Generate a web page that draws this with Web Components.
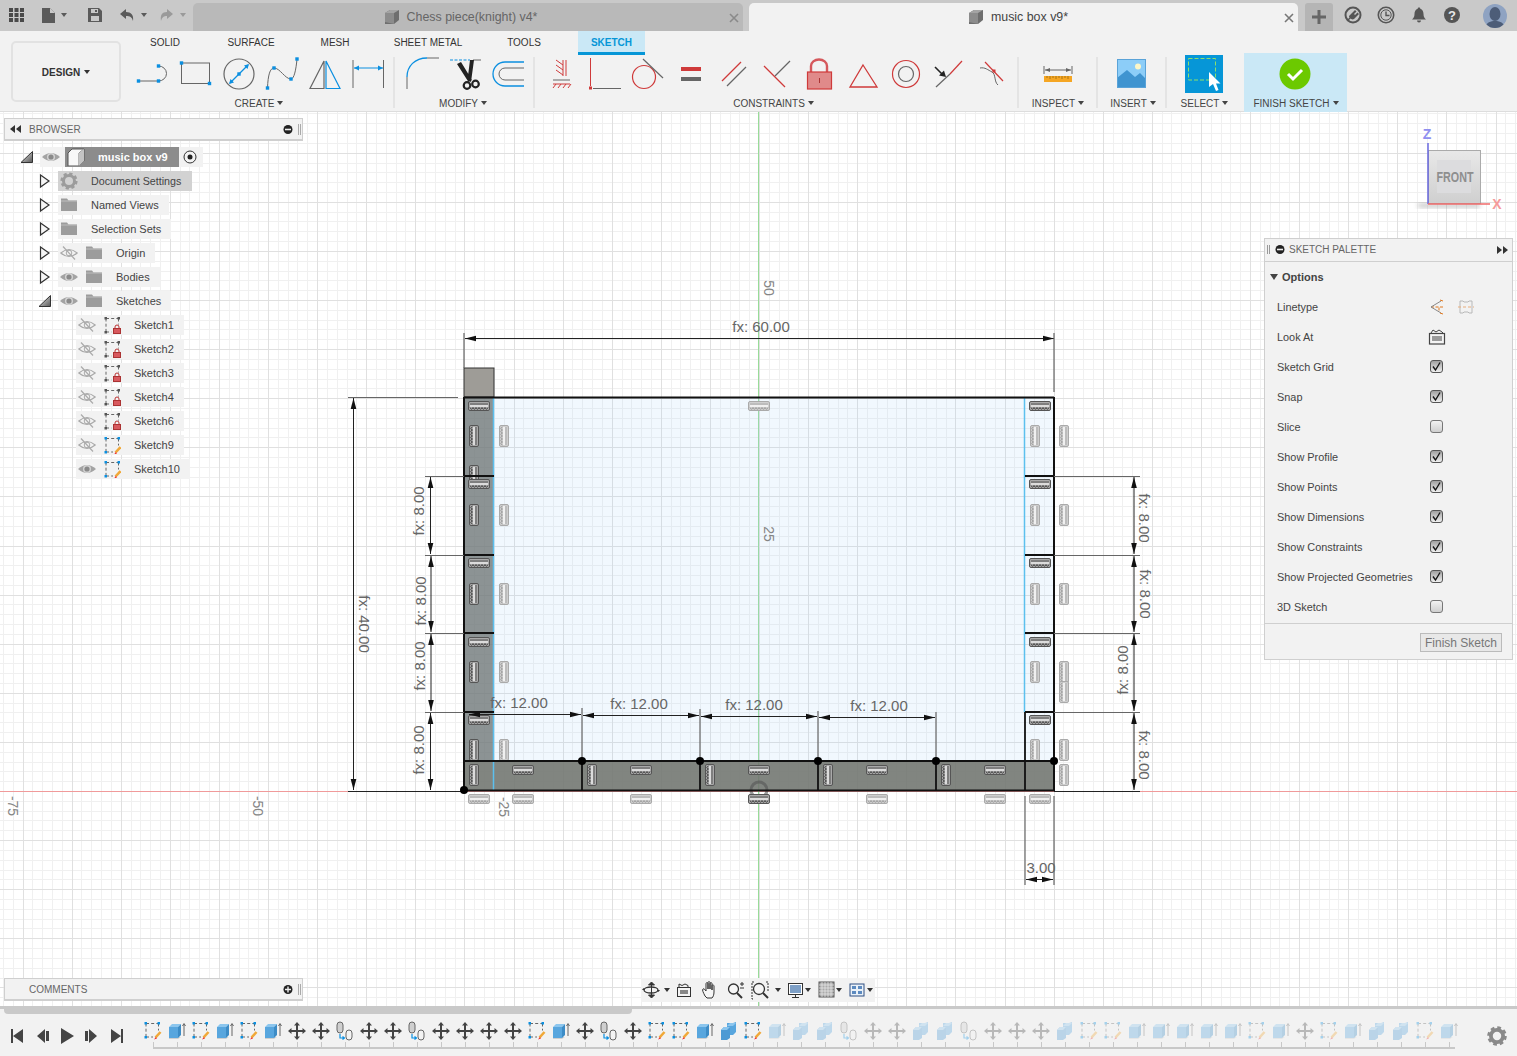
<!DOCTYPE html>
<html>
<head>
<meta charset="utf-8">
<title>music box v9</title>
<style>
  html, body { margin: 0; padding: 0; background: #fff; font-family: "Liberation Sans", Arial, sans-serif; }
</style>
</head>
<body>
<fusion-app>
  <fusion-tabbar></fusion-tabbar>
  <fusion-ribbon></fusion-ribbon>
  <fusion-viewport>
    <sketch-canvas></sketch-canvas>
    <fusion-browser></fusion-browser>
    <view-cube></view-cube>
    <sketch-palette></sketch-palette>
    <fusion-comments></fusion-comments>
    <fusion-navbar></fusion-navbar>
  </fusion-viewport>
  <fusion-timeline></fusion-timeline>
</fusion-app>

<script>
const BL = '#0b8fe0';
const ICONS = {
  eye: '<path d="M0 9Q9 1 18 9Q9 17 0 9Z" fill="#a3a3a3"/><circle cx="9" cy="9" r="4" fill="#d4d4d4"/><circle cx="9" cy="9" r="2.600" fill="#8a8a8a"/>',
  eyeoff: '<path d="M.8 9Q9 2 17.200 9Q9 16 .8 9Z" fill="none" stroke="#aaa" stroke-width="1.200"/><circle cx="9" cy="9" r="2.800" fill="none" stroke="#aaa"/><path d="M3 2.500 15 15.500" stroke="#aaa" stroke-width="1.200"/>',
  folder: '<path d="M1 2.500h6l1.500 2H17V15H1Z" fill="#9c9c9c"/><path d="M1 5h16" stroke="#bdbdbd"/>',
  gear: '<circle cx="9" cy="9" r="5.500" fill="none" stroke="#9c9c9c" stroke-width="3"/><circle cx="9" cy="9" r="7.300" fill="none" stroke="#9c9c9c" stroke-width="2.600" stroke-dasharray="3.200 2.530"/>',
  box: '<path d="M1 5 5 1H17V13L12 18H1Z" fill="#f8f8f8" stroke="#555"/><path d="M12 5V18M12 5 17 1" fill="none" stroke="#777"/><path d="M12 5 17 1V13L12 18Z" fill="#c4c4c4"/>',
  sketchlock: '<path d="M3 2.500H15.500M3 2.500V16M3 16H8.500M15.500 2.500V8.500" fill="none" stroke="#666" stroke-dasharray="3 2.200"/><path d="M1.500 1h2.500v2.500H1.500zM14.500 1H17v2.500h-2.500zM1.500 15H4v2.500H1.500z" fill="#555"/><rect x="10.500" y="12.500" width="7" height="5" fill="#d8595e" stroke="#a33"/><path d="M12 12.500v-1.500a2 2 0 0 1 4 0V12.500" fill="none" stroke="#b33"/>',
  sketchedit: '<path d="M3 2.500H15.500M3 2.500V16M3 16H10M15.500 2.500V9.500" fill="none" stroke="#666" stroke-dasharray="3 2.200"/><path d="M1.500 1h2.500v2.500H1.500zM14.500 1H17v2.500h-2.500zM1.500 15H4v2.500H1.500z" fill="'+BL+'"/><path d="M17.500 11 12.500 16.500" stroke="#f0a838" stroke-width="2.600"/><path d="M12.800 16 11 18.500l3-1Z" fill="#e33"/>',
  extrude: '<path d="M2 16v2h9l3-2z" fill="#cfcfcf"/><path d="M2 6h9v11H2z" fill="#58a6de"/><path d="M2 6l3-3h9l-3 3z" fill="#8cc6ee"/><path d="M11 6l3-3v11l-3 3z" fill="#3d8cc6"/><path d="M17 15V3M15.500 5 17 2.500 18.500 5" fill="none" stroke="#666"/>',
  move: '<path d="M10 1 13 4.500H11V9H15.500V7L19 10 15.500 13V11H11V15.500H13L10 19 7 15.500H9V11H4.500V13L1 10 4.500 7V9H9V4.500H7Z" fill="#444"/>',
  joint: '<rect x="2" y="1" width="6" height="11" rx="3" fill="#cfcfcf" stroke="#666"/><rect x="11" y="9" width="6" height="10" rx="3" fill="#f4f4f4" stroke="#666"/><path d="M5 13V17H9M7.500 15.500 9.500 17 7.500 18.500" fill="none" stroke="'+BL+'" stroke-width="1.200"/>',
  combine: '<path d="M8 2h6l3-1v10l-3 3H8z" fill="#58a6de"/><path d="M8 5l3-3h6l-3 3z" fill="#8cc6ee"/><path d="M2 9l3-3h6v11l-3 2H2z" fill="#4c9ad4"/><path d="M2 9h6l3-3H5z" fill="#8cc6ee"/>',
  plug: '<circle cx="9" cy="9" r="7.500" fill="none" stroke="#555" stroke-width="2"/><path d="M5 10 8 7l3-3 1.500 1.500L10 8l1 1 2.500-2.500L15 8l-5 5c-1.500 1-3 0-3.500-.5L4 15l-1-1 2.500-2.500C5 11 5 10.500 5 10Z" fill="#555"/>',
  clock: '<circle cx="9" cy="9" r="7.700" fill="none" stroke="#555" stroke-width="1.600"/><circle cx="9" cy="9" r="5.200" fill="none" stroke="#555"/><path d="M9 5.500V9.500H12.500" fill="none" stroke="#555" stroke-width="1.400"/>',
  bell: '<path d="M9 1.500c.8 0 1.300.5 1.300 1.300C12.500 3.500 13.500 5.500 13.500 8c0 3 1 4 2.500 5.500H2C3.500 12 4.500 11 4.500 8c0-2.500 1-4.500 3.200-5.200C7.700 2 8.200 1.500 9 1.500Z" fill="#555"/><path d="M7 14.500h4a2 2 0 0 1-4 0Z" fill="#555"/>',
  help: '<circle cx="9" cy="9" r="8" fill="#555"/><text x="9" y="13.500" text-anchor="middle" font-family="Liberation Sans" font-size="13" font-weight="bold" fill="#e8e8e8">?</text>'
};

function icon(name, size = 18, vb = 18) {
  return `<svg width="${size}" height="${size}" viewBox="0 0 ${vb} ${vb}" style="display:block;flex:none">${ICONS[name]}</svg>`;
}

class FusionApp extends HTMLElement {
  constructor() {
    super();
    this.attachShadow({ mode: 'open' });
    this.shadowRoot.innerHTML = `
      <style>
        :host { display: flex; flex-direction: column; width: 1517px; height: 1056px; overflow: hidden; color: #444; }
      </style>
      <slot></slot>`;
  }
}

class FusionTabbar extends HTMLElement {
  constructor() {
    super();
    this.attachShadow({ mode: 'open' });
    const cube = `<svg width="18" height="18" viewBox="0 0 18 18"><path d="M2 5 7 2h9v10l-5 4H2Z" fill="#6e6e6e"/><path d="M2 5 7 2h9l-5 3Z" fill="#a4a4a4"/><path d="M2 5h9v11l-9-2Z" fill="#8c8c8c"/></svg>`;
    const x = c => `<svg width="10" height="10" viewBox="0 0 10 10"><path d="M1 1 9 9M9 1 1 9" stroke="${c}" stroke-width="1.600"/></svg>`;
    this.shadowRoot.innerHTML = `
      <style>
        :host { display: flex; height: 31px; flex: none; background: #c9c9c9; box-sizing: border-box; padding-top: 3px; font-family: "Liberation Sans", sans-serif; font-size: 12.400px; }
        .quick { width: 193px; height: 28px; flex: none; }
        .tab { width: 550px; height: 28px; flex: none; border-radius: 5px 5px 0 0; background: #b9b9b9; color: #666; display: flex; align-items: center; justify-content: center; gap: 6px; position: relative; box-sizing: border-box; padding-right: 16px; }
        .tab.on { background: #f2f2f2; color: #444; margin-left: 6px; width: 549px; padding-right: 12px; }
        .tab .x { position: absolute; right: 4px; top: 9px; }
        .plus { width: 28px; height: 28px; margin-left: 7px; background: #b5b5b5; border-radius: 3px 3px 0 0; flex: none; display: flex; align-items: center; justify-content: center; }
        .tools { display: flex; align-items: center; height: 28px; margin-left: 11px; gap: 15px; margin-top: -2px; }
        .avatar { width: 24px; height: 24px; border-radius: 50%; margin-left: 7px; margin-top: 1px; background: #8fa3c2; overflow: hidden; }
      </style>
      <div class="quick">
        <svg width="193" height="28" viewBox="0 3 193 28" style="display:block">
          <path d="M9 8h4v4H9zM14.500 8h4v4h-4zM20 8h4v4h-4zM9 13h4v4H9zM14.500 13h4v4h-4zM20 13h4v4h-4zM9 18h4v4H9zM14.500 18h4v4h-4zM20 18h4v4h-4z" fill="#4a4a4a"/>
          <path d="M42 8h8l5 5v10H42Z" fill="#5a5a5a"/><path d="M50 8v5h5" fill="#c9c9c9"/>
          <path d="M61 13h6l-3 4Z" fill="#5a5a5a"/>
          <path d="M88 8h11l3 3v11H88Z" fill="#5a5a5a"/><path d="M91 9h7v4h-7zM91 16h8v5h-8z" fill="#c9c9c9"/><path d="M95 10h2v2h-2z" fill="#5a5a5a"/>
          <path d="M126 9 120 14l6 5v-3c4 0 6 1 7 5 1-6-2-9-7-9Z" fill="#5a5a5a"/>
          <path d="M141 13h6l-3 4Z" fill="#5a5a5a"/>
          <path d="M167 9 173 14l-6 5v-3c-3 0-5 1-6 5-1-6 1-9 6-9Z" fill="#9a9a9a"/>
          <path d="M180 13h6l-3 4Z" fill="#9a9a9a"/>
        </svg>
      </div>
      <div class="tab">${cube}<span>Chess piece(knight) v4*</span><span class="x">${x('#8a8a8a')}</span></div>
      <div class="tab on">${cube}<span>music box v9*</span><span class="x">${x('#777')}</span></div>
      <div class="plus"><svg width="14" height="14" viewBox="0 0 14 14"><path d="M7 0v14M0 7h14" stroke="#666" stroke-width="3"/></svg></div>
      <div class="tools">${icon('plug')}${icon('clock')}${icon('bell')}${icon('help')}
        <div class="avatar"><svg width="24" height="24" viewBox="0 0 24 24" style="display:block"><ellipse cx="12" cy="10" rx="5.500" ry="7" fill="#4d5d78"/><path d="M2 24c1-6 6-7 10-7s9 1 10 7Z" fill="#4d5d78"/></svg></div>
      </div>`;
  }
}

class RibbonGroup extends HTMLElement {
  connectedCallback() {
    this.attachShadow({ mode: 'open' });
    const w = this.getAttribute('w');
    const top = this.hasAttribute('finish');
    this.shadowRoot.innerHTML = `
      <style>
        :host { display: block; flex: none; width: ${w}px; height: ${top ? 59 : 51}px; margin-top: ${top ? 22 : 2}px; box-sizing: border-box; font-family: "Liberation Sans", sans-serif; }
        :host([sep]) { border-right: 2px solid #e4e4e4; }
        :host([finish]) { background: #cae8f6; }
        ::slotted(svg) { display: block; overflow: visible; margin-top: ${top ? 0 : -2}px; }
        .lbl { margin-top: ${top ? 5 : 3}px; height: 12px; line-height: 12px; text-align: center; font-size: 10px; color: #444; white-space: nowrap; padding-left: ${this.getAttribute('pl') || 0}px; padding-right: ${this.getAttribute('pr') || 0}px; }
        .lbl i { display: inline-block; border: 3px solid transparent; border-top: 4px solid #444; border-bottom: 0; margin-left: 3px; vertical-align: 2px; }
      </style>
      <slot></slot>
      <div class="lbl">${this.getAttribute('label')}<i></i></div>`;
  }
}

class FusionRibbon extends HTMLElement {
  constructor() {
    super();
    this.attachShadow({ mode: 'open' });
    const sq = (x, y) => `<rect x="${x - 1.700}" y="${y - 1.700}" width="3.400" height="3.400" fill="${BL}"/>`;
    const R = '#cf3a3a', G = '#666';
    this.shadowRoot.innerHTML = `
      <style>
        :host { display: flex; flex: none; height: 81px; box-sizing: border-box; background: #f2f2f2; border-bottom: 1px solid #ddd; padding-left: 11px; font-family: "Liberation Sans", sans-serif; }
        .design { width: 110px; height: 61px; margin: 10px 9px 0 0; box-sizing: border-box; border: 2px solid #e2e2e2; border-radius: 5px; display: flex; align-items: center; justify-content: center; font-size: 10px; font-weight: bold; color: #333; flex: none; padding-top: 1px; }
        .design i { display: inline-block; border: 3px solid transparent; border-top: 4px solid #333; border-bottom: 0; margin-left: 4px; }
        .main { width: 1114px; flex: none; }
        .tabs { display: flex; height: 24px; }
        .tabs span { font-size: 10px; line-height: 24px; text-align: center; color: #333; flex: none; }
        .tabs .on { margin-left: 18px; box-sizing: border-box; height: 24px; background: #cae8f6; color: #0696d7; font-weight: bold; border-bottom: 3px solid #0696d7; }
        .groups { display: flex; }
      </style>
      <div class="design">DESIGN<i></i></div>
      <div class="main">
        <div class="tabs">
          <span style="width:70px">SOLID</span><span style="width:102px">SURFACE</span><span style="width:66px">MESH</span><span style="width:120px">SHEET METAL</span><span style="width:72px">TOOLS</span><span class="on" style="width:67px">SKETCH</span>
        </div>
        <div class="groups">
          <ribbon-group w="265" label="CREATE" pr="5" sep><svg width="265" height="40" viewBox="130 55 265 40">
            <path d="M138.500 81H158.500" stroke="${G}" fill="none"/><path d="M158.500 66A8 7.500 0 0 1 158.500 81" stroke="${G}" fill="none"/>${sq(138.500, 81)}${sq(158.500, 81)}${sq(158.500, 66)}
            <rect x="181.500" y="63" width="28" height="20.500" fill="none" stroke="${G}"/>${sq(181.500, 63)}${sq(209.500, 83.500)}
            <circle cx="239" cy="74" r="15" fill="none" stroke="${G}" stroke-width="1.200"/><path d="M230 83 248 65" stroke="${BL}" stroke-width="1.200"/><path d="M229 84l1.500-5 3.500 3.500zM249 64l-5 1.500 3.500 3.500z" fill="${BL}"/>${sq(239, 74)}
            <path d="M267.500 88C268 75 270 68 274 68C280 68 285 79 291 79C294 79 296 70 297 59" fill="none" stroke="${G}"/>${sq(267.500, 88)}${sq(274, 68)}${sq(291, 79)}${sq(297, 59)}
            <path d="M324 61V88.500H310Z" fill="none" stroke="${G}" stroke-width="1.200"/><path d="M326 61V88.500H340Z" fill="none" stroke="${BL}" stroke-width="1.200"/>
            <path d="M353 60V88M383.500 60V88" stroke="${G}"/><path d="M354 68H383" stroke="${BL}"/><path d="M354 68l5-2.500v5zM383 68l-5-2.500v5z" fill="${BL}"/>
          </svg></ribbon-group>
          <ribbon-group w="140" label="MODIFY" pr="2" sep><svg width="140" height="40" viewBox="395 55 140 40">
            <path d="M407 77C407 66 415 58 427 58" fill="none" stroke="${BL}" stroke-width="1.300"/><path d="M427 58H439M407 77V89" fill="none" stroke="${G}"/>
            <path d="M450 60H470" stroke="${BL}" stroke-dasharray="3 1.500"/><path d="M473 60H481" stroke="${G}"/>
            <path d="M457 64 461 62 472 80 468.500 82ZM470 60 474 60 471 82 467.500 80Z" fill="#222"/><circle cx="475.500" cy="84" r="3.300" fill="none" stroke="#222" stroke-width="2.200"/><circle cx="467" cy="85.500" r="3.300" fill="none" stroke="#222" stroke-width="2.200"/>
            <path d="M524 62H505A12 12 0 0 0 505 86H524" fill="none" stroke="${BL}" stroke-width="1.300"/><path d="M524 68H505A6 6 0 0 0 505 80H524" fill="none" stroke="${G}"/>
          </svg></ribbon-group>
          <ribbon-group w="484" label="CONSTRAINTS" pr="5" sep><svg width="484" height="40" viewBox="535 55 484 40">
            <path d="M556 60l7 5M556 65l7 5M556 70l7 5M563 60V76M566 60V76" stroke="${R}" fill="none"/><path d="M553 80H570" stroke="${G}"/><path d="M553 84H570M556 84l-3 4M561 84l-3 4M566 84l-3 4M571 84l-3 4" stroke="${R}" fill="none"/>
            <path d="M590.500 58V86" stroke="${R}"/><rect x="589" y="86.500" width="3" height="3" fill="${R}"/><path d="M593 88.500H621" stroke="${G}"/>
            <circle cx="644" cy="77" r="11.500" fill="none" stroke="${R}" stroke-width="1.200"/><path d="M643 59 663 78" stroke="${G}" stroke-width="1.200"/>
            <rect x="681" y="67" width="20" height="4" fill="${R}"/><rect x="681" y="77" width="20" height="4" fill="${G}"/>
            <path d="M722 81 741 62" stroke="${R}" stroke-width="1.200"/><path d="M727 86 746 67" stroke="${G}" stroke-width="1.200"/>
            <path d="M764 66 785 87" stroke="${R}" stroke-width="1.200"/><path d="M775 76 790 61" stroke="${G}" stroke-width="1.200"/>
            <path d="M811 72V66a8 6.500 0 0 1 16 0V72" fill="none" stroke="#d5585c" stroke-width="2.400"/><rect x="807.500" y="72" width="24" height="17" fill="#e08a8a" stroke="#cf3a3a" stroke-width="1.200"/><path d="M819.500 78V83" stroke="#a33"/>
            <path d="M863 65 877 87H850Z" fill="none" stroke="${R}" stroke-width="1.300"/>
            <circle cx="906" cy="74" r="13.500" fill="none" stroke="${R}" stroke-width="1.200"/><circle cx="906" cy="74" r="7.500" fill="none" stroke="${G}" stroke-width="1.200"/>
            <path d="M936 87 950 74" stroke="${G}" stroke-width="1.200"/><path d="M950 74 962 61" stroke="${R}" stroke-width="1.200"/><path d="M935 67 942 74" stroke="#222" stroke-width="1.600"/><path d="M946 77 939 75.500 944 70.500Z" fill="#222"/>
            <path d="M985 62 1003 81" stroke="${R}" stroke-width="1.200"/><path d="M980 68C985 67 988 70 992 72S994 82 998 85" fill="none" stroke="${G}"/><rect x="992.500" y="69.500" width="3" height="3" fill="${R}"/>
          </svg></ribbon-group>
          <ribbon-group w="79" label="INSPECT" pl="1" sep><svg width="79" height="40" viewBox="1019 55 79 40">
            <path d="M1044 66V74M1072 66V74M1045 70H1071" stroke="#666" fill="none"/><path d="M1045 70l5-2v4zM1071 70l-5-2v4z" fill="#666"/>
            <rect x="1044" y="76" width="28" height="6" fill="#f5a623"/><path d="M1047 76v2M1050 76v3M1053 76v2M1056 76v3M1059 76v2M1062 76v3M1065 76v2M1068 76v3" stroke="#a87415"/>
          </svg></ribbon-group>
          <ribbon-group w="69" label="INSERT" pl="3" sep><svg width="69" height="40" viewBox="1098 55 69 40">
            <rect x="1117" y="59" width="29" height="29" fill="#8ccdf8"/><path d="M1117 78 1127 70 1135 77 1140 73 1146 79V88H1117Z" fill="#3f94d0"/><circle cx="1138" cy="66.500" r="3" fill="#fbf6c8"/><rect x="1117.500" y="59.500" width="28" height="28" fill="none" stroke="#5aa3d8"/>
          </svg></ribbon-group>
          <ribbon-group w="77" label="SELECT" pr="2"><svg width="77" height="40" viewBox="1167 55 77 40">
            <rect x="1185" y="55" width="38" height="38" fill="#0696d7"/><rect x="1188.500" y="58.500" width="27" height="21.500" fill="none" stroke="#8ee06a" stroke-dasharray="4 2"/><path d="M1209 72V87L1213 84 1216 91 1218.500 90 1216 83.500H1220.500Z" fill="#fff"/>
          </svg></ribbon-group>
        </div>
      </div>
      <ribbon-group w="103" label="FINISH SKETCH" pl="1" finish><svg width="103" height="40" viewBox="1244 53 103 40">
        <circle cx="1295" cy="74" r="15.500" fill="#6cc900"/><path d="M1288 74 1293 79 1302 70" fill="none" stroke="#fff" stroke-width="3"/>
      </svg></ribbon-group>`;
  }
}

class FusionViewport extends HTMLElement {
  constructor() {
    super();
    this.attachShadow({ mode: 'open' });
    this.shadowRoot.innerHTML = `
      <style>:host { display: block; position: relative; flex: none; height: 894px; background: #fff; overflow: hidden; }</style>
      <slot></slot>`;
  }
}

// the drawing area uses page coordinates, the viewBox starts below the ribbon
class SketchCanvas extends HTMLElement {
  connectedCallback() {
    this.attachShadow({ mode: 'open' });
    const U = 9.82, OX = 759, OY = 791;
    let minor = '', major = '';
    for (let k = -77; k <= 78; k++) {
      const x = Math.round(OX + k * U) + .5;
      if (k % 5 === 0) major += `M${x} 112V1006`; else minor += `M${x} 112V1006`;
    }
    for (let k = -22; k <= 70; k++) {
      const y = Math.round(OY - k * U) + .5;
      if (k % 5 === 0) major += `M0 ${y}H1517`; else minor += `M0 ${y}H1517`;
    }

    const h = (x, y, c) => `<use href="#g${c}" transform="translate(${x - 11} ${y - 5})"/>`;
    const v = (x, y, c) => `<use href="#g${c}" transform="translate(${x + 5} ${y - 11}) rotate(90)"/>`;
    let glyphs = v(474, 476, 'D');
    [[479,406],[479,484],[479,563],[479,642],[479,720],[523,770],[641,770],[759,770],[877,770],[995,770],
     [1040,406],[1040,484],[1040,563],[1040,642],[1040,720],[759,799]].forEach(p => glyphs += h(p[0], p[1], 'D'));
    [[759,406],[479,799],[523,799],[641,799],[877,799],[995,799],[1040,799]].forEach(p => glyphs += h(p[0], p[1], 'P'));
    [[474,436],[474,515],[474,594],[474,672],[474,750],[474,775],[592,775],[710,775],[828,775],[946,775]].forEach(p => glyphs += v(p[0], p[1], 'D'));
    [[504,436],[504,515],[504,594],[504,672],[504,750],[1035,436],[1035,515],[1035,594],[1035,672],[1035,750],
     [1064,436],[1064,515],[1064,594],[1064,672],[1064,692],[1064,750],[1064,775]].forEach(p => glyphs += v(p[0], p[1], 'P'));

    const ah = (x, y, d) => `<path d="M${x} ${y}l${d * 11} -2.800v5.600z" fill="#111"/>`;
    const av = (x, y, d) => `<path d="M${x} ${y}l-2.800 ${d * 11}h5.600z" fill="#111"/>`;
    const hdim = (x1, x2, y) => `<path d="M${x1} ${y}H${x2}" stroke="#222"/>${ah(x1, y, 1)}${ah(x2, y, -1)}`;
    const vdim = (x, y1, y2) => `<path d="M${x} ${y1}V${y2}" stroke="#222"/>${av(x, y1, 1)}${av(x, y2, -1)}`;
    const wit = d => `<path d="${d}" stroke="#666" stroke-width="1.200" fill="none"/>`;
    const txt = (x, y, s, r = 0, cls = 'dim') => `<text class="${cls}" x="${x}" y="${y}" transform="rotate(${r} ${x} ${y})">${s}</text>`;

    const dims = [
      hdim(465, 1054, 338.500), wit('M464 333V368M1054 333V392'),
      vdim(353.500, 398, 790), wit('M348 397.500H458'),
      vdim(430.500, 477, 554), vdim(431, 556, 632), vdim(431, 634, 711), vdim(430.500, 713, 790),
      wit('M425 476.500H464M425 555.500H464M425 633.500H464M425 712.500H464'),
      vdim(1134, 477, 554), vdim(1134, 556, 632), vdim(1134, 634, 711), vdim(1134, 713, 790),
      wit('M1054 476.500H1140M1054 555.500H1140M1054 633.500H1140M1054 712.500H1140'),
      hdim(469, 581, 714.500), hdim(583, 699, 715.500), hdim(701, 817, 716.500), hdim(819, 935, 717.500),
      wit('M582 708V761M700 709V761M818 711V761M936 712V761'),
      wit('M1025 796V885M1054 796V885'), hdim(1026, 1053, 879.500),
      txt(761, 326, 'fx: 60.00'), txt(364, 624, 'fx: 40.00', 90),
      txt(418, 511, 'fx: 8.00', -90), txt(420, 601, 'fx: 8.00', -90), txt(419, 666, 'fx: 8.00', -90), txt(418, 750, 'fx: 8.00', -90),
      txt(1144, 518, 'fx: 8.00', 90), txt(1145, 594, 'fx: 8.00', 90), txt(1122, 670, 'fx: 8.00', -90), txt(1144, 755, 'fx: 8.00', 90),
      txt(519, 702, 'fx: 12.00'), txt(639, 703, 'fx: 12.00'), txt(754, 704, 'fx: 12.00'), txt(879, 705, 'fx: 12.00'),
      txt(1041, 867, '3.00')
    ].join('');

    const serr = 'M2 6.500q1.500 3.500 3 0q1.500 3.500 3 0q1.500 3.500 3 0q1.500 3.500 3 0q1.500 3.500 3 0q1.500 3.500 3 0';
    this.shadowRoot.innerHTML = `
      <style>
        :host { display: block; position: absolute; inset: 0; }
        svg { display: block; }
        text { font-family: "Liberation Sans", sans-serif; text-anchor: middle; dominant-baseline: central; }
        .dim { font-size: 15px; fill: #666; }
        .ax { font-size: 14px; fill: #858585; }
      </style>
      <svg width="1517" height="894" viewBox="0 112 1517 894">
        <defs>
          <g id="gD"><rect x=".5" y=".5" width="21" height="9" rx="1.500" fill="#a9a9a9" stroke="#555"/><path d="M2 3H20" stroke="#555"/><path d="M2 4H20V6H2Z" fill="#dcdcdc"/><path d="${serr}" fill="none" stroke="#444"/></g>
          <g id="gP"><rect x=".5" y=".5" width="21" height="9" rx="1.500" fill="#cfcfcf" stroke="#aaa"/><path d="M2 3H20" stroke="#aaa"/><path d="M2 4H20V6H2Z" fill="#f0f0f0"/><path d="${serr}" fill="none" stroke="#9c9c9c"/></g>
        </defs>
        <path d="${minor}" stroke="#f0f0f0" fill="none" shape-rendering="crispEdges"/>
        <path d="${major}" stroke="#e0e0e0" fill="none" shape-rendering="crispEdges"/>
        <path d="M0 791.500H1517" stroke="#f09a9a" shape-rendering="crispEdges"/>
        <path d="M758.500 112V1006" stroke="#98dc98" shape-rendering="crispEdges"/>

        <rect x="464" y="397" width="590" height="364" fill="#9ed2f5" fill-opacity=".15"/>
        <rect x="464" y="397" width="30" height="364" fill="#707676" fill-opacity=".78"/>
        <rect x="464" y="761" width="590" height="30" fill="#6f746e" fill-opacity=".88"/>
        <rect x="464" y="368" width="30" height="29" fill="#9e9c97" stroke="#333"/>
        <circle cx="759" cy="790" r="8" fill="none" stroke="#555" stroke-width="3" stroke-opacity=".6"/>
        ${glyphs}
        <path d="M493.500 397V791M1024.500 397V712" stroke="#5cc0ee" stroke-width="1.500"/>
        <path d="M464 397.500H1054M1054 397V791M464 397V791M464 790.500H1054M464 761H1054" stroke="#111" stroke-width="2" fill="none"/>
        <path d="M464 476H494M464 555H494M464 633H494M464 712H494M1025 476H1054M1025 555H1054M1025 633H1054M1025 712H1054M582 761V791M700 761V791M818 761V791M936 761V791M1025 712V791" stroke="#111" stroke-width="1.800" fill="none"/>
        <path d="M348 791.500H464M1054 791.500H1140" stroke="#222"/>
        ${dims}
        <g fill="#000"><circle cx="464" cy="790" r="4"/><circle cx="582" cy="761" r="4"/><circle cx="700" cy="761" r="4"/><circle cx="818" cy="761" r="4"/><circle cx="936" cy="761" r="4"/><circle cx="1054" cy="761" r="4"/></g>
        ${txt(769, 288, '50', 90, 'ax')}${txt(769, 534, '25', 90, 'ax')}${txt(504, 807, '-25', 90, 'ax')}${txt(258, 806, '-50', 90, 'ax')}${txt(13, 806, '-75', 90, 'ax')}
      </svg>`;
  }
}

class TreeRow extends HTMLElement {
  connectedCallback() {
    this.attachShadow({ mode: 'open' });
    const a = this.getAttribute.bind(this);
    const arrow = a('arrow');
    const arrowSvg = arrow === 'right'
      ? '<svg width="18" height="20" viewBox="0 0 18 20"><path d="M4.500 4 13 10 4.500 16Z" fill="#f6f6f6" stroke="#333" stroke-width="1.200"/></svg>'
      : arrow === 'open'
      ? '<svg width="18" height="20" viewBox="0 0 18 20"><defs><linearGradient id="o" x1="0" y1="0" x2="1" y2="1"><stop offset="0" stop-color="#eee"/><stop offset="1" stop-color="#555"/></linearGradient></defs><path d="M3 15.500 14.500 15.500 14.500 4.500Z" fill="url(#o)" stroke="#333"/></svg>'
      : '';
    const eye = a('eye') ? `<span class="ic">${icon(a('eye') === 'on' ? 'eye' : 'eyeoff')}</span>` : '';
    const cls = a('icon');
    this.shadowRoot.innerHTML = `
      <style>
        :host { display: flex; height: 20px; align-items: center; gap: 4px; font-size: 11px; color: #444; }
        .arrow { width: 18px; height: 20px; flex: none; }
        .pill { display: flex; align-items: center; height: 20px; background: #f2f2f2; padding: 0 10px 0 2px; white-space: nowrap; }
        :host([sel]) .pill { background: #d2d2d2; padding-right: 11px; font-size: 10.700px; }
        .ic { width: 18px; height: 18px; flex: none; }
        .ic + .ic { margin-left: 7px; }
        .t { margin-left: 13px; }
        :host([root]) .pill { padding-right: 5px; }
        .bar { display: flex; align-items: center; width: 114px; height: 20px; background: #8c8c8c; margin-left: 5px; box-sizing: border-box; padding-left: 2px; color: #fff; font-weight: bold; }
        .bar span { margin-left: 13px; }
        .radio { margin-left: 3px; }
      </style>
      <div class="arrow">${arrowSvg}</div>
      <div class="pill">${a('root') !== null
        ? `${eye}<div class="bar">${icon('box')}<span>${a('label')}</span></div><svg class="radio" width="16" height="16" viewBox="0 0 16 16"><circle cx="8" cy="8" r="6" fill="#f4f4f4" stroke="#333"/><circle cx="8" cy="8" r="2.500" fill="#222"/></svg>`
        : `${eye}<span class="ic">${icon(cls)}</span><span class="t">${a('label')}</span>`}</div>`;
    this.style.marginLeft = (a('indent') || 0) + 'px';
  }
}

class PanelHeader extends HTMLElement {
  connectedCallback() {
    this.attachShadow({ mode: 'open' });
    const collapsed = this.hasAttribute('plus');
    const mid = collapsed
      ? '<path d="M5 2.500v6M2 5.500h6" stroke="#eee" stroke-width="1.400"/>'
      : '<path d="M2 5.500h6" stroke="#eee" stroke-width="1.600"/>';
    this.shadowRoot.innerHTML = `
      <style>
        :host { display: flex; align-items: center; height: 23px; box-sizing: border-box; border: 1px solid #cfcfcf; border-bottom-width: 2px; background: #f2f2f2; font-size: 10px; color: #666; padding-left: 5px; }
        .l { width: 19px; flex: none; }
        .t { flex: 1; }
        .r { flex: none; display: block; }
      </style>
      <div class="l">${collapsed ? '' : '<svg width="12" height="8" viewBox="0 0 12 8" style="display:block"><path d="M5 0V8L0 4ZM11 0V8L6 4Z" fill="#333"/></svg>'}</div>
      <div class="t">${this.getAttribute('label')}</div>
      <svg class="r" width="19" height="11" viewBox="0 0 19 11"><circle cx="5" cy="5.500" r="4.500" fill="#222"/>${mid}<path d="M15.500 0v11M17.500 0v11" stroke="#aaa"/></svg>`;
  }
}

class FusionBrowser extends HTMLElement {
  constructor() {
    super();
    this.attachShadow({ mode: 'open' });
    const sk = (label, eye, ic) => `<tree-row indent="50" eye="${eye}" icon="${ic}" label="${label}"></tree-row>`;
    this.shadowRoot.innerHTML = `
      <style>
        :host { display: block; position: absolute; left: 4px; top: 6px; width: 299px; font-family: "Liberation Sans", sans-serif; }
        .tree { display: flex; flex-direction: column; gap: 4px; margin-top: 6px; }
      </style>
      <panel-header label="BROWSER"></panel-header>
      <div class="tree">
        <tree-row root indent="14" arrow="open" eye="on" label="music box v9"></tree-row>
        <tree-row sel indent="32" arrow="right" icon="gear" label="Document Settings"></tree-row>
        <tree-row indent="32" arrow="right" icon="folder" label="Named Views"></tree-row>
        <tree-row indent="32" arrow="right" icon="folder" label="Selection Sets"></tree-row>
        <tree-row indent="32" arrow="right" eye="off" icon="folder" label="Origin"></tree-row>
        <tree-row indent="32" arrow="right" eye="on" icon="folder" label="Bodies"></tree-row>
        <tree-row indent="32" arrow="open" eye="on" icon="folder" label="Sketches"></tree-row>
        ${sk('Sketch1', 'off', 'sketchlock')}${sk('Sketch2', 'off', 'sketchlock')}${sk('Sketch3', 'off', 'sketchlock')}${sk('Sketch4', 'off', 'sketchlock')}${sk('Sketch6', 'off', 'sketchlock')}${sk('Sketch9', 'off', 'sketchedit')}${sk('Sketch10', 'on', 'sketchedit')}
      </div>`;
  }
}

class FusionComments extends HTMLElement {
  constructor() {
    super();
    this.attachShadow({ mode: 'open' });
    this.shadowRoot.innerHTML = `
      <style>:host { display: block; position: absolute; left: 4px; top: 866px; width: 299px; font-family: "Liberation Sans", sans-serif; }</style>
      <panel-header plus label="COMMENTS"></panel-header>`;
  }
}

class ViewCube extends HTMLElement {
  constructor() {
    super();
    this.attachShadow({ mode: 'open' });
    this.shadowRoot.innerHTML = `
      <style>
        :host { display: block; position: absolute; left: 1410px; top: 10px; width: 100px; height: 100px; }
        text { font-family: "Liberation Sans", sans-serif; text-anchor: middle; font-weight: bold; }
      </style>
      <svg width="100" height="100" viewBox="1410 122 100 100" style="display:block">
        <defs>
          <linearGradient id="f" x1="0" y1="0" x2="0" y2="1"><stop offset="0" stop-color="#e8e8e8"/><stop offset="1" stop-color="#cfcfcf"/></linearGradient>
          <filter id="b"><feGaussianBlur stdDeviation="2.500"/></filter>
        </defs>
        <rect x="1418" y="203" width="62" height="5" fill="#999" opacity=".5" filter="url(#b)"/>
        <rect x="1428.500" y="150.500" width="52" height="53" fill="url(#f)" stroke="#aaa"/>
        <rect x="1437" y="160" width="34" height="33" fill="#dcdcde"/>
        <text x="1455" y="182" font-size="14" textLength="37" lengthAdjust="spacingAndGlyphs" fill="#8e8e8e">FRONT</text>
        <path d="M1428 143V204" stroke="#6a6ae0" stroke-width="1.500"/>
        <path d="M1428 204H1490" stroke="#f06a6a" stroke-width="1.500"/>
        <text x="1427" y="139" font-size="14" fill="#8f8ff0">Z</text>
        <text x="1497" y="209" font-size="14" fill="#f59a9a">X</text>
      </svg>`;
  }
}

class PaletteRow extends HTMLElement {
  connectedCallback() {
    this.attachShadow({ mode: 'open' });
    const check = this.getAttribute('check');
    const box = check === null ? '' :
      `<div class="cb ${check === 'on' ? 'on' : ''}">${check === 'on' ? '<svg width="11" height="11" viewBox="0 0 11 11" style="display:block"><path d="M2 5.500 4.500 9 9 1.500" fill="none" stroke="#111" stroke-width="1.300"/></svg>' : ''}</div>`;
    this.shadowRoot.innerHTML = `
      <style>
        :host { display: grid; grid-template-columns: 141px 20px 20px; column-gap: 9px; align-items: center; height: 30px; padding-left: 12px; font-size: 10.900px; color: #444; }
        .c { display: flex; justify-content: center; align-items: center; margin-top: -1px; margin-left: -1px; }
        .cb { width: 11px; height: 11px; border: 1px solid #555; border-radius: 3px; background: linear-gradient(#d8d8d8, #f4f4f4); }
        .cb:not(.on) { border-color: #777; background: linear-gradient(#f2f2f2, #cfcfcf); }
        .cb.on { background: linear-gradient(#a0a0a0, #f0f0f0); }
      </style>
      <div>${this.getAttribute('label')}</div>
      <div class="c">${box}<slot></slot></div>
      <div class="c"><slot name="b"></slot></div>`;
  }
}

class SketchPalette extends HTMLElement {
  constructor() {
    super();
    this.attachShadow({ mode: 'open' });
    this.shadowRoot.innerHTML = `
      <style>
        :host { display: block; position: absolute; left: 1264px; top: 126px; width: 249px; height: 422px; box-sizing: border-box; border: 1px solid #cfcfcf; background: #f2f2f2; font-family: "Liberation Sans", sans-serif; }
        .head { display: flex; align-items: center; border-bottom: 1px solid #cfcfcf; font-size: 10px; color: #666; padding: 0 4px 1px 1px; height: 21px; }
        .head .t { flex: 1; margin-left: 3px; }
        .opt { display: flex; align-items: center; height: 30px; font-size: 11px; font-weight: bold; color: #444; padding-left: 5px; gap: 4px; }
        .foot { border-top: 1px solid #cfcfcf; margin-top: 1px; display: flex; justify-content: flex-end; padding: 9px 10px 0 0; }
        .btn { width: 82px; height: 19px; box-sizing: border-box; border: 1px solid #bbb; background: #e8e8e8; color: #777; font-size: 12px; line-height: 18px; text-align: center; }
        svg { display: block; }
      </style>
      <div class="head">
        <svg width="20" height="11" viewBox="0 0 20 11"><path d="M1.500 1v9M3.500 1v9" stroke="#999"/><circle cx="14" cy="5.500" r="4.500" fill="#222"/><path d="M11 5.500h6" stroke="#eee" stroke-width="1.600"/></svg>
        <div class="t">SKETCH PALETTE</div>
        <svg width="11" height="8" viewBox="0 0 11 8"><path d="M0 0V8L5 4ZM6 0V8L11 4Z" fill="#333"/></svg>
      </div>
      <div class="opt"><svg width="8" height="6" viewBox="0 0 8 6"><path d="M0 0H8L4 6Z" fill="#444"/></svg>Options</div>
      <palette-row label="Linetype">
        <svg width="18" height="18" viewBox="0 0 18 18"><path d="M3 9H15" stroke="#e0781e" stroke-dasharray="3 1.500"/><path d="M3 9 13 3M3 9 13 15" stroke="#888"/><path d="M11 9.500v3M12 2l3 1M12 15l3 1" stroke="#e0781e"/></svg>
        <svg slot="b" width="18" height="18" viewBox="0 0 18 18" style="opacity:.55"><path d="M3 3h3l1 1h4l1-1h3v12h-3l-1-1H7l-1 1H3Z" fill="none" stroke="#888"/><path d="M1 9h16" stroke="#e0781e" stroke-dasharray="3 2"/></svg>
      </palette-row>
      <palette-row label="Look At">
        <svg width="18" height="18" viewBox="0 0 18 18"><rect x="1.500" y="5.500" width="15" height="10.500" fill="#f4f4f4" stroke="#444" stroke-width="1.200"/><rect x="4" y="8" width="10" height="5" fill="#9a9a9a"/><path d="M3 5 5 2l3 2 3-2 3 2 1 1" fill="none" stroke="#444"/></svg>
      </palette-row>
      <palette-row label="Sketch Grid" check="on"></palette-row>
      <palette-row label="Snap" check="on"></palette-row>
      <palette-row label="Slice" check="off"></palette-row>
      <palette-row label="Show Profile" check="on"></palette-row>
      <palette-row label="Show Points" check="on"></palette-row>
      <palette-row label="Show Dimensions" check="on"></palette-row>
      <palette-row label="Show Constraints" check="on"></palette-row>
      <palette-row label="Show Projected Geometries" check="on"></palette-row>
      <palette-row label="3D Sketch" check="off"></palette-row>
      <div class="foot"><div class="btn">Finish Sketch</div></div>`;
  }
}

class FusionNavbar extends HTMLElement {
  constructor() {
    super();
    this.attachShadow({ mode: 'open' });
    const car = x => `<path d="M${x - 3} 988h6l-3 4Z" fill="#333"/>`;
    this.shadowRoot.innerHTML = `
      <style>:host { display: block; position: absolute; left: 641px; top: 866px; width: 234px; height: 24px; background: #f2f2f2; }</style>
      <svg width="234" height="24" viewBox="641 978 234 24" style="display:block">
        <path d="M651.500 983V997M651.500 982l-3 3h6ZM651.500 998l-3-3h6Z" fill="#333" stroke="#333"/><ellipse cx="651" cy="990" rx="7" ry="3" fill="none" stroke="#333" stroke-width="1.300"/><path d="M642 990h3l-1.500-2zM660 990h-3l1.500 2z" fill="#333"/>
        ${car(667)}
        <rect x="677.500" y="987.500" width="13" height="9" fill="#f4f4f4" stroke="#333"/><rect x="680" y="990" width="8" height="4" fill="#888"/><path d="M679 987V984l3 1.500 3-1.500 3 1.500V987" fill="none" stroke="#333"/>
        <path d="M705 996C703 992 702 990 703 989S705 990 706 991V984C706 982 708 982 708 984V989V983C708 981 710 981 710 983V989V984C710 982 712 982 712 984V990V986C712 984 714 985 714 986V992C714 995 713 997 712 998H707Z" fill="#f6f6f6" stroke="#333"/>
        <circle cx="733.500" cy="989" r="5" fill="#f6f6f6" stroke="#333" stroke-width="1.300"/><path d="M737 993 742 998" stroke="#333" stroke-width="2"/><path d="M740 984h4M742 982v4M740 988h4" stroke="#333" fill="none"/>
        <circle cx="759" cy="989" r="5.500" fill="#f6f6f6" stroke="#333" stroke-width="1.300"/><path d="M763 993 768 998" stroke="#333" stroke-width="2"/><path d="M754 982h-2v17h2M766 982h2v10" fill="none" stroke="#333" stroke-dasharray="2 1"/>
        ${car(778)}
        <rect x="788.500" y="983.500" width="14" height="11" fill="#fff" stroke="#333"/><rect x="790" y="985" width="11" height="8" fill="#7d9fc6"/><path d="M795.500 995v2M792 997.500h7" stroke="#333"/>
        ${car(808)}
        <rect x="819" y="982" width="15" height="15" fill="#aaa" stroke="#555"/><path d="M822 982v15M825 982v15M828 982v15M831 982v15M819 985h15M819 988h15M819 991h15M819 994h15" stroke="#eee" stroke-width=".7"/>
        ${car(839)}
        <rect x="850" y="984" width="14" height="12" fill="#eaf1f8" stroke="#2f4f82"/><path d="M852 986h4v3h-4zM858 986h4v3h-4zM852 991h4v3h-4zM858 991h4v3h-4z" fill="#5c8ac0"/>
        ${car(870)}
      </svg>`;
  }
}

class TimelineItem extends HTMLElement {
  connectedCallback() {
    this.attachShadow({ mode: 'open' });
    const names = { s: 'sketchedit', e: 'extrude', m: 'move', j: 'joint', c: 'combine' };
    this.shadowRoot.innerHTML = `
      <style>
        :host { display: block; width: 24px; height: 26px; flex: none; background: linear-gradient(#c8c8c8,#c8c8c8) center bottom / 1px 5px no-repeat; }
        div { margin-left: 2px; }
        :host([dim]) div { opacity: .33; }
      </style>
      <div>${icon(names[this.getAttribute('type')], 20, 20)}</div>`;
  }
}

class FusionTimeline extends HTMLElement {
  constructor() {
    super();
    this.attachShadow({ mode: 'open' });
    const on = 'sesesemmjmmjmmmmsemjmssecs';
    const off = 'eccjmmccjmmmcsseeeeesemseccse';
    const cells = [...on].map(t => `<timeline-item type="${t}"></timeline-item>`).join('')
      + [...off].map(t => `<timeline-item dim type="${t}"></timeline-item>`).join('');
    this.shadowRoot.innerHTML = `
      <style>
        :host { display: block; flex: none; height: 50px; background: #f2f2f2; }
        .track { height: 8px; box-sizing: border-box; border-top: 3px solid #c9c9c9; }
        .thumb { width: 628px; height: 8px; margin: -3px 0 0 4px; background: #c9c9c9; border-radius: 0 0 4px 4px; }
        .row { display: flex; height: 42px; }
        .ctl { width: 141px; flex: none; }
        .items { padding-top: 7px; flex: none; }
        .cells { display: flex; }
        .rule { margin-left: 12px; width: 1302px; height: 2px; background: #c8c8c8; }
        .gear { margin: 12px 0 0 26px; }
        svg { display: block; }
      </style>
      <div class="track"><div class="thumb"></div></div>
      <div class="row">
        <div class="ctl">
          <svg width="141" height="42" viewBox="0 1014 141 42">
            <g fill="#444">
              <path d="M11 1029h2v14h-2zM23 1029v14l-10-7z"/>
              <path d="M45 1029v14l-8-7zM46 1031h3v10h-3z"/>
              <path d="M61 1028 74 1036 61 1044z"/>
              <path d="M85 1031h3v10h-3zM89 1029l8 7-8 7z"/>
              <path d="M111 1029v14l10-7zM121 1029h2v14h-2z"/>
            </g>
          </svg>
        </div>
        <div class="items">
          <div class="cells">${cells}</div>
          <div class="rule"></div>
        </div>
        <div class="gear"><svg width="20" height="20" viewBox="0 0 18 18"><circle cx="9" cy="9" r="5.500" fill="none" stroke="#8a8a8a" stroke-width="3.400"/><circle cx="9" cy="9" r="7.500" fill="none" stroke="#8a8a8a" stroke-width="2.600" stroke-dasharray="3.300 2.590"/></svg></div>
      </div>`;
  }
}

customElements.define('fusion-app', FusionApp);
customElements.define('fusion-tabbar', FusionTabbar);
customElements.define('ribbon-group', RibbonGroup);
customElements.define('fusion-ribbon', FusionRibbon);
customElements.define('fusion-viewport', FusionViewport);
customElements.define('sketch-canvas', SketchCanvas);
customElements.define('tree-row', TreeRow);
customElements.define('panel-header', PanelHeader);
customElements.define('fusion-browser', FusionBrowser);
customElements.define('fusion-comments', FusionComments);
customElements.define('view-cube', ViewCube);
customElements.define('palette-row', PaletteRow);
customElements.define('sketch-palette', SketchPalette);
customElements.define('fusion-navbar', FusionNavbar);
customElements.define('timeline-item', TimelineItem);
customElements.define('fusion-timeline', FusionTimeline);
</script>
</body>
</html>
